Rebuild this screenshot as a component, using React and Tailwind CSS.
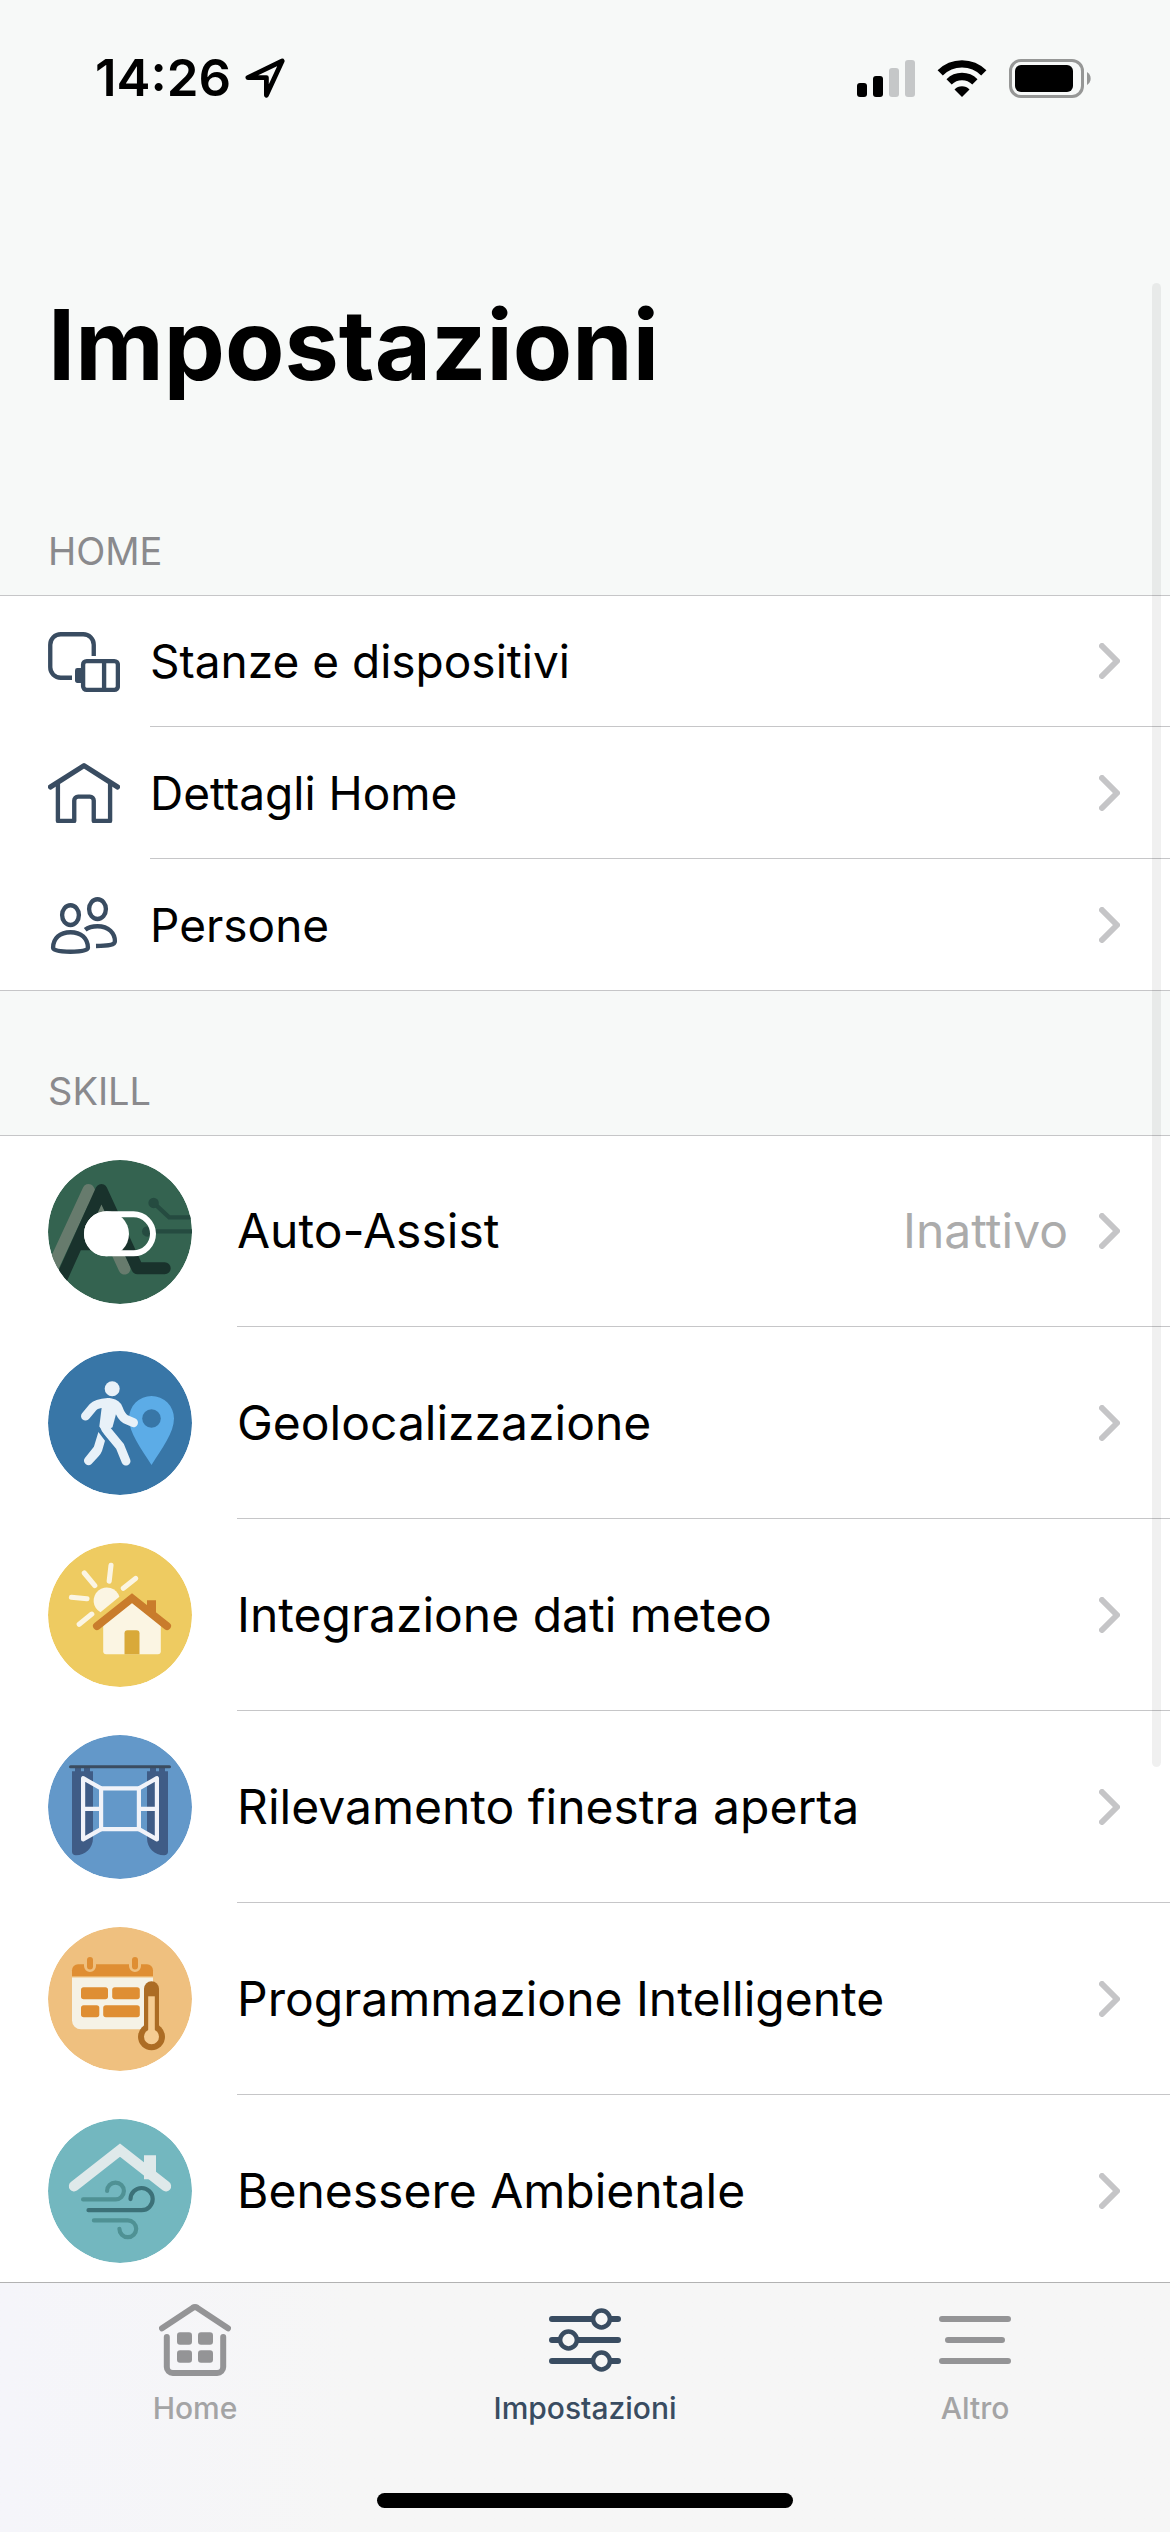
const HOME_ITEMS = [
  { label: 'Stanze e dispositivi', Icon: DevicesIcon },
  { label: 'Dettagli Home', Icon: HouseIcon },
  { label: 'Persone', Icon: PeopleIcon },
];

const SKILLS = [
  { label: 'Auto-Assist', Icon: AutoAssistIcon, status: 'Inattivo' },
  { label: 'Geolocalizzazione', Icon: GeoIcon },
  { label: 'Integrazione dati meteo', Icon: WeatherIcon },
  { label: 'Rilevamento finestra aperta', Icon: WindowIcon },
  { label: 'Programmazione Intelligente', Icon: ScheduleIcon },
  { label: 'Benessere Ambientale', Icon: AirIcon },
];

const TABS = [
  { label: 'Home', Icon: HomeTabIcon },
  { label: 'Impostazioni', Icon: SlidersIcon, active: true },
  { label: 'Altro', Icon: MenuIcon },
];

export default function App() {
  return (
    <div className="relative flex h-screen flex-col overflow-hidden bg-[#f7f9f8] font-['Inter',sans-serif] text-black">
      <main className="min-h-0 flex-1 overflow-y-auto [scrollbar-width:none]">
        <StatusBar />
        <h1 className="px-12 pt-[129px] pb-[46px] text-[97px] leading-[120px] font-bold">Impostazioni</h1>

        <section>
          <SectionTitle>HOME</SectionTitle>
          <ul className="border-y border-[#c6c6c8] bg-white">
            {HOME_ITEMS.map((item) => (
              <HomeRow key={item.label} {...item} />
            ))}
          </ul>
        </section>

        <section>
          <SectionTitle>SKILL</SectionTitle>
          <ul className="border-t border-[#c6c6c8] bg-white">
            {SKILLS.map((item) => (
              <SkillRow key={item.label} {...item} />
            ))}
          </ul>
        </section>
      </main>

      {/* scroll indicator */}
      <div className="absolute top-[283px] right-[9px] h-[1484px] w-[9px] rounded-full bg-black/6" />

      <TabBar />
    </div>
  );
}

function StatusBar() {
  return (
    <header className="flex h-[156px] items-center justify-between pr-[79px] pl-[95px]">
      <div className="flex items-center gap-3.5">
        <span className="text-[51px] leading-[60px] font-semibold">14:26</span>
        <svg viewBox="0 0 40 40" className="size-10" fill="none" stroke="black" strokeWidth="4.8" strokeLinejoin="round">
          <path d="M2.8 19.6 37.2 3 21.4 37.2V19.6Z" />
        </svg>
      </div>
      <div className="flex items-center gap-[22px]">
        <svg viewBox="0 0 58 37" className="h-[37px] w-[58px]">
          <rect x="0" y="23" width="10" height="14" rx="3" />
          <rect x="16" y="16" width="10" height="21" rx="3" />
          <rect x="32" y="8" width="10" height="29" rx="3" fill="#c5c7c8" />
          <rect x="48" y="0" width="10" height="37" rx="3" fill="#c5c7c8" />
        </svg>
        <svg viewBox="0 0 50 37" className="h-[37px] w-[50px]">
          <path d="M3.2 12.9A30.8 30.8 0 0 1 46.8 12.9" fill="none" stroke="black" strokeWidth="7.4" />
          <path d="M12.1 21.8A18.3 18.3 0 0 1 37.9 21.8" fill="none" stroke="black" strokeWidth="7.4" />
          <path d="M25 37 17.5 29.5A10.5 10.5 0 0 1 32.5 29.5Z" />
        </svg>
        <svg viewBox="0 0 82 39" className="h-[39px] w-[82px]">
          <rect x="1.5" y="1.5" width="72" height="36" rx="10.5" fill="none" stroke="#969796" strokeWidth="3" />
          <rect x="6" y="6" width="58" height="27" rx="6" />
          <path d="M78 13a7.6 7.6 0 0 1 0 13Z" fill="#969796" />
        </svg>
      </div>
    </header>
  );
}

function SectionTitle({ children }) {
  return (
    <h2 className="flex h-[144px] items-end px-12 pb-5 text-[38px] leading-[48px] text-[#8a8a8d]">{children}</h2>
  );
}

function HomeRow({ label, Icon }) {
  return (
    <li className="group">
      <a href="#" className="flex items-center gap-[30px] pl-12">
        <Icon />
        <div className="flex h-[132px] flex-1 items-center border-b border-[#c6c6c8] pr-[50px] group-first:h-[131px] group-last:h-[131px] group-last:border-b-0">
          <span className="flex-1 text-[46px] leading-[60px]">{label}</span>
          <Chevron />
        </div>
      </a>
    </li>
  );
}

function SkillRow({ label, Icon, status }) {
  return (
    <li className="group">
      <a href="#" className="flex items-center gap-[45px] pl-12">
        <Icon />
        <div className="flex h-[192px] flex-1 items-center border-b border-[#c6c6c8] pr-[50px] group-first:h-[191px]">
          <span className="flex-1 text-[48px] leading-[60px]">{label}</span>
          {status && <span className="mr-[31px] text-[48px] leading-[60px] text-[#ababab]">{status}</span>}
          <Chevron />
        </div>
      </a>
    </li>
  );
}

function TabBar() {
  return (
    <footer className="border-t border-[#b2b2b2] bg-[#f6f6f6] bg-linear-to-r from-[#f5f5fa] to-[#f6f6f6] to-30% pb-6">
      <nav className="grid grid-cols-3 pt-[21px]">
        {TABS.map(({ label, Icon, active }) => (
          <a
            key={label}
            href="#"
            aria-current={active ? 'page' : undefined}
            className={`flex flex-col items-center gap-3 ${active ? 'text-[#394c61]' : 'text-[#949496]'}`}
          >
            <Icon />
            <span className={`text-[30px] leading-[40px] font-medium ${active ? '' : 'text-[#a4a4a5]'}`}>{label}</span>
          </a>
        ))}
      </nav>
      <div className="mx-auto mt-[65px] h-[15px] w-[416px] rounded-full bg-black" />
    </footer>
  );
}

function Chevron() {
  return (
    <svg
      viewBox="0 0 21 36"
      className="h-9 w-[21px]"
      fill="none"
      stroke="#c5c5c7"
      strokeWidth="6"
      strokeLinecap="round"
      strokeLinejoin="round"
    >
      <path d="M3 3 18 18 3 33" />
    </svg>
  );
}

/* line icons, 24 unit grid */

function LineIcon({ children }) {
  return (
    <svg viewBox="0 0 24 24" className="size-[72px] shrink-0" fill="none" stroke="#394c61" strokeWidth="1.45">
      {children}
    </svg>
  );
}

function DevicesIcon() {
  return (
    <LineIcon>
      <path d="M15.25 10V6.25a3.5 3.5 0 0 0-3.5-3.5h-7.5a3.5 3.5 0 0 0-3.5 3.5v7.5a3.5 3.5 0 0 0 3.5 3.5H8" />
      <rect x="11.7" y="11.7" width="11.6" height="9.6" rx="1.2" />
      <path d="M18.7 11.7v9.6" />
      <path d="M11.5 14H9.8a.8.8 0 0 0-.8.8v3.4c0 .5.3.8.8.8h1.7Z" fill="#394c61" stroke="none" />
    </LineIcon>
  );
}

function HouseIcon() {
  return (
    <LineIcon>
      <path d="M.8 10 12 2.9 23.2 10" strokeWidth="1.7" strokeLinecap="round" strokeLinejoin="round" />
      <path d="M3.3 9v12.3h5.45v-6.8a1.3 1.3 0 0 1 1.3-1.3h3.9a1.3 1.3 0 0 1 1.3 1.3v6.8h5.45V9" strokeLinejoin="round" />
    </LineIcon>
  );
}

function PeopleIcon() {
  return (
    <LineIcon>
      <ellipse cx="7.5" cy="8.7" rx="2.8" ry="3.3" />
      <ellipse cx="16.5" cy="6.7" rx="2.8" ry="3.3" />
      <path d="M1.7 19.6C1.7 16.4 4 14.4 7.5 14.4s5.8 2 5.8 5.2c0 1-2.5 1.3-5.8 1.3s-5.8-.3-5.8-1.3Z" />
      <path d="M12.4 13.6c1.1-.9 2.6-1.2 4.1-1.2 3.8 0 5.8 2.4 5.8 5 0 1.3-2 1.5-6.3 1.6" />
    </LineIcon>
  );
}

/* round skill badges, 48 unit grid */

function Badge({ color, children }) {
  return (
    <svg viewBox="0 0 48 48" className="size-36 shrink-0 rounded-full" fill="none">
      <circle cx="24" cy="24" r="24" fill={color} />
      {children}
    </svg>
  );
}

function AutoAssistIcon() {
  return (
    <Badge color="#346350">
      <g stroke="#254b40" strokeWidth="1.4">
        <path d="M35.2 14.3 40.4 19.1H48M33.1 23.8H48" />
        <circle cx="35.2" cy="14.3" r="1.75" fill="#254b40" stroke="none" />
        <circle cx="33.1" cy="23.8" r="1.75" fill="#254b40" stroke="none" />
      </g>
      <g strokeWidth="4" strokeLinecap="round" strokeLinejoin="round">
        <path d="M1 37 13.5 10 25.5 36.2" stroke="#677b6d" />
        <path d="M4.5 39.5 17.8 10 29.8 36.1h9.1M10 28.1h14" stroke="#19322c" />
      </g>
      <rect x="13" y="18.1" width="22" height="13" rx="6.5" stroke="white" strokeWidth="2" />
      <circle cx="19.5" cy="24.6" r="7.5" fill="white" />
    </Badge>
  );
}

function GeoIcon() {
  return (
    <Badge color="#3876a7">
      <path d="M34.5 38C31 32.5 27 27.2 27 22.5a7.5 7.5 0 0 1 15 0C42 27.2 38 32.5 34.5 38Z" fill="#5cace7" />
      <circle cx="34.5" cy="22.5" r="3.1" fill="#3876a7" />
      <g stroke="#e8f1f8" strokeWidth="3" strokeLinecap="round" strokeLinejoin="round">
        <path d="M12.5 21.7 15 18.7Q16.2 17.5 20 17.2" />
        <path d="M21 17.3Q22.8 17.6 23.4 19.1 24.4 21.9 25.8 22.7L28.5 23.9" />
        <path d="M18.9 25Q19.1 25.9 19.8 26.7L24 31.8 26 36.7" />
      </g>
      <g fill="#e8f1f8">
        <circle cx="21.4" cy="12.6" r="2.5" />
        <path d="M18.2 16.5 20.5 15.7 23.5 17 22.7 20.9 21.5 25.4 18.5 27 17.1 25.2Z" />
        <path d="M16.8 27 19 29.9 18 33.3Q17.600 34.300 16.800 35.200L14.500 37.700A1.500 1.500 0 0 1 12.300 35.700L15.300 31.900Z" />
      </g>
    </Badge>
  );
}

function WeatherIcon() {
  return (
    <Badge color="#eecb61">
      <path d="M17.5 23.1A4.4 4.4 0 1 1 23.8 17.9Z" fill="#fbf5e3" />
      <path
        d="M21 7.4 20.4 12.7M12.1 10 15.6 14.2M7.8 18.1 13 18.6M10.4 27.1 14.6 23.7M29.2 11.8 25.1 15.1"
        stroke="#fbf5e3"
        strokeWidth="1.7"
        strokeLinecap="round"
      />
      <path d="M18.4 27.5 28 19.5 37.6 27.5V36.1a1 1 0 0 1-1 1H19.4a1 1 0 0 1-1-1Z" fill="#fbf5e3" />
      <path d="M25.5 37.1V30.1a1 1 0 0 1 1-1h3a1 1 0 0 1 1 1v7Z" fill="#d9a939" />
      <path d="M33 19.1h3v6.4l-3-2.6Z" fill="#c97c2c" />
      <path d="M16.3 27.7 28 18.4 39.7 27.7" stroke="#c97c2c" strokeWidth="2.6" strokeLinecap="round" />
    </Badge>
  );
}

function WindowIcon() {
  return (
    <Badge color="#6398c9">
      <path d="M9 11h2v1.1h1V11h2v1.1h1V34.3c0 3.4-2.6 5.8-5.7 5.8-.8 0-1.3-.5-1.3-1.2V12.1h1Z" fill="#3f5c86" />
      <path d="M39 11h-2v1.1h-1V11h-2v1.1h-1V34.3c0 3.4 2.6 5.8 5.7 5.8.8 0 1.3-.5 1.3-1.2V12.1h-1Z" fill="#3f5c86" />
      <rect x="7" y="10.1" width="34" height="1" rx=".5" fill="#3b4c60" />
      <g stroke="#f1f3f9" strokeWidth="1.4" strokeLinejoin="round">
        <rect x="17.7" y="17.8" width="12.6" height="13.6" />
        <path d="M17.7 17.8 11.7 14.4V34.8L17.7 31.4M11.7 24.6h6" />
        <path d="M30.3 17.8 36.3 14.4V34.8L30.3 31.4M36.3 24.6h-6" />
      </g>
    </Badge>
  );
}

function ScheduleIcon() {
  return (
    <Badge color="#efc07f">
      <path d="M8 16.4V14.4a2 2 0 0 1 2-2H33a2 2 0 0 1 2 2v2Z" fill="#df8e33" />
      <path d="M8 16.8H35V31.1a3 3 0 0 1-3 3H11a3 3 0 0 1-3-3Z" fill="#f5f2e6" />
      <path d="M14 11v2M29 11v2" stroke="#efc07f" strokeWidth="4" strokeLinecap="round" />
      <path d="M14 11v2.200M29 11v2.200" stroke="#df8e33" strokeWidth="2" strokeLinecap="round" />
      <g fill="#df8e33">
        <rect x="11" y="20.1" width="9" height="4" rx=".9" />
        <rect x="21.4" y="20.1" width="9.2" height="4" rx=".9" />
        <rect x="11" y="26.1" width="6.1" height="4" rx=".9" />
        <rect x="18.4" y="26.1" width="12.2" height="4" rx=".9" />
      </g>
      <g fill="#ac6c24">
        <rect x="32" y="18.1" width="5" height="18" rx="2.5" />
        <circle cx="34.5" cy="36.6" r="4.5" />
      </g>
      <g fill="#f5cc92">
        <rect x="33.4" y="23.1" width="2.2" height="12" />
        <circle cx="34.5" cy="36.6" r="2.5" />
      </g>
    </Badge>
  );
}

function AirIcon() {
  return (
    <Badge color="#73b7bf">
      <path d="M8.7 22.4 24 10.4 39.3 22.4" stroke="#dfe9ea" strokeWidth="3.5" strokeLinecap="round" />
      <path d="M32 12.1h4v8h-4Z" fill="#dfe9ea" />
      <g strokeWidth="1.4" strokeLinecap="round">
        <path d="M11.7 26.8h10.8a2.8 2.8 0 1 0-2.8-2.8" stroke="#4f9194" />
        <path d="M15.3 33.8h11.3a2.8 2.8 0 1 1-2.8 2.8" stroke="#4f9194" />
        <path d="M13.5 30.4h17.7a3.7 3.7 0 1 0-3.7-3.7" stroke="#3c7178" />
      </g>
    </Badge>
  );
}

/* tab bar icons */

function TabIcon({ children }) {
  return (
    <svg viewBox="0 0 24 24" className="size-[72px]" fill="none" stroke="currentColor" strokeWidth="2" strokeLinecap="round">
      {children}
    </svg>
  );
}

function HomeTabIcon() {
  return (
    <TabIcon>
      <path d="M1 8.1 11.2 1.3a1.5 1.5 0 0 1 1.6 0L23 8.1" />
      <path d="M2.6 11V21a2 2 0 0 0 2 2H19.4a2 2 0 0 0 2-2V11" />
      <g fill="currentColor" stroke="none">
        <rect x="6" y="9.4" width="5" height="4.2" rx="1" />
        <rect x="13" y="9.4" width="5" height="4.2" rx="1" />
        <rect x="6" y="15.4" width="5" height="4.2" rx="1" />
        <rect x="13" y="15.4" width="5" height="4.2" rx="1" />
      </g>
    </TabIcon>
  );
}

function SlidersIcon() {
  return (
    <TabIcon>
      <path d="M1 5h22M1 12h22M1 19h22" />
      <g fill="#f6f6f6" strokeWidth="1.5">
        <circle cx="17.5" cy="5" r="2.8" />
        <circle cx="6.5" cy="12" r="2.8" />
        <circle cx="17.5" cy="19" r="2.8" />
      </g>
    </TabIcon>
  );
}

function MenuIcon() {
  return (
    <TabIcon>
      <path d="M1 5h22M3 12h18M1 19h22" />
    </TabIcon>
  );
}
